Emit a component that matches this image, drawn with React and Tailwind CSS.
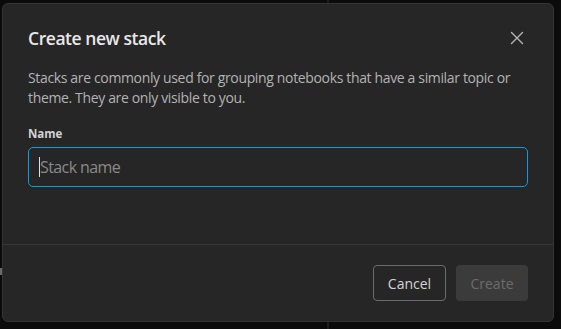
import React from 'react';

function CloseIcon() {
  return (
    <svg width="14" height="14" viewBox="0 0 14 14" fill="none" stroke="currentColor" strokeWidth="1.4" strokeLinecap="round">
      <path d="M1.5 1.5L12.5 12.5M12.5 1.5L1.5 12.5" />
    </svg>
  );
}

export default function App() {
  return (
    <div className="relative w-[561px] h-[329px] bg-[#0b0b0b] pt-[3px] pl-[2px] font-['Open_Sans',sans-serif]">
      <div className="absolute left-[327px] top-0 w-[2px] h-full bg-[#1c1c1c]" />
      <div className="absolute left-0 top-[268px] w-[2px] h-[7px] bg-[#6a6a6a]" />

      <div className="relative w-[552px] h-[319px] bg-[#262626] border border-[#343434] rounded-md flex flex-col">
        <div className="px-[25px] pt-[22px] flex-1">
          <div className="flex items-start justify-between">
            <h2 className="text-[17.5px] leading-6 font-semibold tracking-[-0.45px] text-[#e8e8e8]">Create new stack</h2>
            <button className="mt-[5px] mr-[4px] text-[#b5b5b5]">
              <CloseIcon />
            </button>
          </div>
          <p className="mt-[18px] text-[14px] leading-5 text-[#b3b3b3] tracking-[-0.35px]">
            Stacks are commonly used for grouping notebooks that have a similar topic or theme. They are only visible to you.
          </p>
          <label className="block mt-[17px] text-[11.5px] font-bold text-[#d2d2d2]">Name</label>
          <div className="mt-[5px] h-[40px] w-[500px] border border-[#0b9de3] rounded-[5px] flex items-center pl-[10px]">
            <span className="w-px h-[20px] bg-[#e0e0e0]" />
            <span className="text-[16px] text-[#8a8a8a] tracking-[-0.6px]">Stack name</span>
          </div>
        </div>
        <div className="h-px bg-[#363636]" />
        <div className="h-[76px] flex items-center justify-end gap-[10px] pr-[25px]">
          <button className="h-[36px] w-[73px] rounded-[4px] border border-[#6b6b6b] text-[14px] text-[#d4d4d4]">Cancel</button>
          <button className="h-[36px] w-[72px] rounded-[4px] bg-[#3b3b3b] text-[14px] text-[#6c6c6c]">Create</button>
        </div>
      </div>
    </div>
  );
}
